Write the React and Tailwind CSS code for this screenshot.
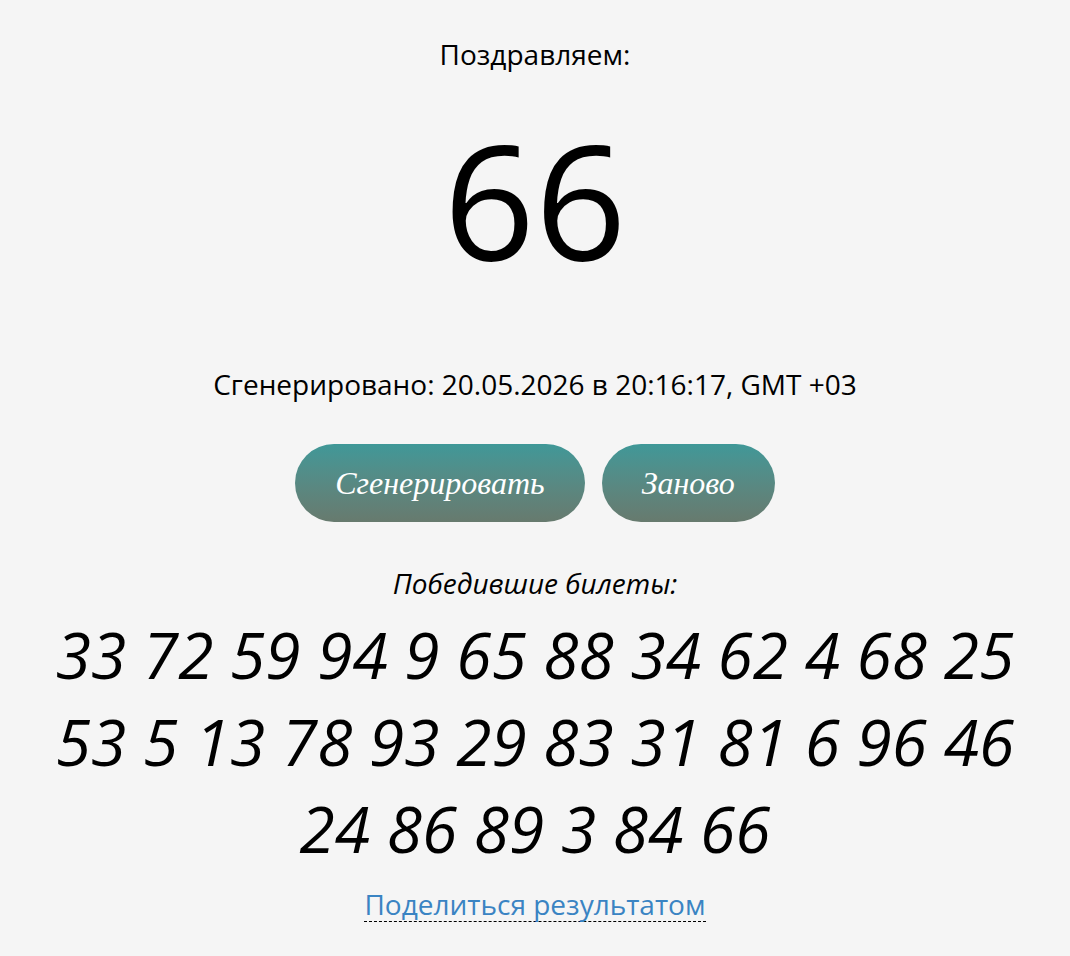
import React from 'react';

const tickets = [33, 72, 59, 94, 9, 65, 88, 34, 62, 4, 68, 25, 53, 5, 13, 78, 93, 29, 83, 31, 81, 6, 96, 46, 24, 86, 89, 3, 84, 66];

const App = () => {
  return (
    <div className="min-h-screen bg-[#f5f5f5] text-black" style={{ fontFamily: '"Open Sans", "Noto Sans", sans-serif' }}>
      <div className="mx-auto w-[1000px] flex flex-col items-center text-center pt-[36px]">
        <div className="text-[28px] leading-[36px]">Поздравляем:</div>
        <div className="text-[160px] leading-[218px] mt-[17px]">66</div>
        <div className="text-[28px] leading-[36px] mt-[59px]">Сгенерировано: 20.05.2026 в 20:16:17, GMT +03</div>
        <div className="flex gap-[17px] mt-[42px]">
          <button className="h-[78px] px-[40px] rounded-full bg-gradient-to-b from-[#3f9898] to-[#677a6e] text-white italic text-[32px]" style={{ fontFamily: '"Liberation Serif", serif' }}>
            Сгенерировать
          </button>
          <button className="h-[78px] px-[40px] rounded-full bg-gradient-to-b from-[#3f9898] to-[#677a6e] text-white italic text-[32px]" style={{ fontFamily: '"Liberation Serif", serif' }}>
            Заново
          </button>
        </div>
        <div className="italic text-[28px] leading-[36px] mt-[43px]">Победившие билеты:</div>
        <div className="italic text-[64px] leading-[87px] mt-[10px]">
          {tickets.join(' ')}
        </div>
        <a href="#" className="mt-[15px] text-[28px] leading-[34px] text-[#3a84c3] border-b border-dashed border-black">
          Поделиться результатом
        </a>
      </div>
    </div>
  );
};

export default App;
